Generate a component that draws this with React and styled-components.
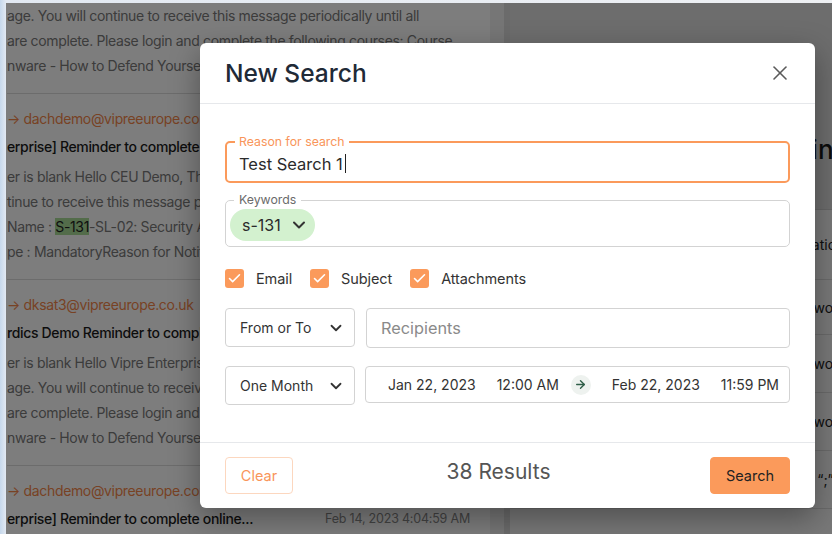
import React from "react";
import styled, { createGlobalStyle } from "styled-components";
import { X, ChevronDown, Check, ArrowRight } from "lucide-react";

const GlobalStyle = createGlobalStyle`
  html, body {
    margin: 0;
    padding: 0;
  }
  body {
    font-family: Inter, "Noto Sans", sans-serif;
    background: #e9eef4;
  }
  * {
    box-sizing: border-box;
  }
`;

const Screen = styled.div`
  position: relative;
  width: 832px;
  height: 534px;
  overflow: hidden;
  padding: 3px 0 0 6px;
  background: linear-gradient(90deg, #c6d8ec 0px, #e2e9f2 6px, #eef0f3 100%);
`;

const Window = styled.div`
  position: relative;
  display: flex;
  height: 100%;
  background: #fff;
  overflow: hidden;
`;

/* ---------- message list ---------- */

const ListPanel = styled.div`
  width: 484px;
  flex-shrink: 0;
  padding-left: 1px;
  overflow: hidden;
  font-size: 14px;
  letter-spacing: -0.35px;
`;

const Item = styled.div`
  padding: ${p => (p.$first ? "0" : "13px")} 0 15px;
  border-bottom: 1px solid #dcdcdc;
`;

const FromLine = styled.div`
  height: 24px;
  line-height: 24px;
  color: #f4874a;
  white-space: nowrap;
`;

const SubjectLine = styled.div`
  display: flex;
  align-items: center;
  justify-content: space-between;
  height: 30px;
  padding-right: 20px;
`;

const Subject = styled.span`
  font-weight: 500;
  color: #1c1c1c;
  white-space: nowrap;
`;

const Stamp = styled.span`
  font-size: 12.5px;
  letter-spacing: -0.2px;
  color: #8a8a8a;
  white-space: nowrap;
`;

const Body = styled.div`
  margin-top: ${p => (p.$first ? "0" : "3px")};
  color: #7a7a7a;
  line-height: 25px;
  white-space: nowrap;
`;

const Hit = styled.mark`
  background: #a9dc98;
  color: #1f1f1f;
`;

const Gutter = styled.div`
  width: 20px;
  flex-shrink: 0;
  background: #f1f1f1;
  border-right: 6px solid #dadada;
`;

/* ---------- detail panel ---------- */

const DetailPanel = styled.div`
  flex: 1;
  display: flex;
  flex-direction: column;
  background: #f4f4f4;
  overflow: hidden;
`;

const DetailHead = styled.div`
  height: 207px;
  display: flex;
  align-items: flex-end;
  padding: 0 0 44px 20px;
  background: #dedede;
  border-bottom: 1px solid #cfcfcf;
`;

const DetailTitle = styled.h2`
  margin: 0;
  font-size: 26px;
  font-weight: 500;
  color: #1a1a1a;
  white-space: nowrap;
`;

const DetailRow = styled.div`
  height: ${p => p.$h}px;
  display: grid;
  grid-template-columns: 260px auto;
  align-items: center;
  padding-left: 20px;
  border-bottom: 1px solid #d8d8d8;
  font-size: 14px;
  color: #222;
  white-space: nowrap;
`;

const DetailLabel = styled.span`
  color: #666;
`;

/* ---------- modal ---------- */

const Overlay = styled.div`
  position: absolute;
  inset: 0;
  background: rgba(0, 0, 0, 0.51);
  padding: 40px 0 0 194px;
`;

const Modal = styled.div`
  width: 615px;
  background: #fff;
  border-radius: 6px;
  box-shadow: 0 10px 30px rgba(0, 0, 0, 0.35);
  overflow: hidden;
`;

const Header = styled.div`
  height: 61px;
  display: flex;
  align-items: center;
  justify-content: space-between;
  padding: 0 25px;
  border-bottom: 1px solid #e6e8eb;
`;

const Title = styled.h1`
  margin: 0;
  font-size: 24.5px;
  font-weight: 500;
  color: #1f2a37;
`;

const CloseButton = styled.button`
  display: flex;
  padding: 0;
  margin-right: -2px;
  border: 0;
  background: none;
  color: #5a5a5a;
  cursor: pointer;
`;

const FormBody = styled.div`
  padding: 31px 25px 37px;
`;

const Field = styled.fieldset`
  margin: ${p => (p.$gap ? `${p.$gap}px` : "0")} 0 0;
  min-width: 0;
  border-radius: 5px;
  border: ${p => (p.$active ? "2px solid #fb9a5b" : "1px solid #d3d3d3")};
  padding: ${p => (p.$active ? "0 12px 3px" : "2px 4px 5px")};
`;

const Legend = styled.legend`
  padding: 0 ${p => (p.$active ? 4 : 5)}px;
  margin-left: ${p => (p.$active ? -4 : 4)}px;
  font-size: 12.3px;
  line-height: 14px;
  color: ${p => (p.$active ? "#f9955a" : "#6b6b6b")};
`;

const ValueLine = styled.div`
  height: 29px;
  display: flex;
  align-items: center;
  font-size: 16.5px;
  color: #2b2b2b;
`;

const Caret = styled.span`
  display: inline-block;
  width: 1px;
  height: 19px;
  margin-left: 2px;
  background: #222;
`;

const Chip = styled.span`
  display: inline-flex;
  align-items: center;
  gap: 8px;
  height: 32px;
  padding: 0 6px 0 12px;
  border-radius: 16px;
  background: #d3f1cf;
  font-size: 16px;
  color: #2b2b2b;
`;

const CheckRow = styled.div`
  display: flex;
  align-items: center;
  margin-top: 22px;
  height: 19px;
`;

const CheckItem = styled.label`
  display: flex;
  align-items: center;
  gap: 12px;
  margin-right: 18px;
  font-size: 14.5px;
  letter-spacing: -0.1px;
  color: #333;
`;

const Box = styled.span`
  width: 19px;
  height: 19px;
  border-radius: 3px;
  background: #fb9a5b;
  color: #fff;
  display: flex;
  align-items: center;
  justify-content: center;
`;

const Row = styled.div`
  display: flex;
  align-items: flex-start;
  gap: ${p => p.$space}px;
  margin-top: ${p => p.$gap}px;
`;

const Select = styled.div`
  width: 130px;
  height: 39px;
  flex-shrink: 0;
  display: flex;
  align-items: center;
  justify-content: space-between;
  padding: 0 9px 0 14px;
  border: 1px solid #d3d3d3;
  border-radius: 4px;
  font-size: 14px;
  color: #333;
`;

const TextInput = styled.div`
  flex: 1;
  height: 40px;
  display: flex;
  align-items: center;
  padding-left: 14px;
  border: 1px solid #d3d3d3;
  border-radius: 4px;
  font-size: 16.3px;
  color: #8a8a8a;
`;

const DateRange = styled.div`
  flex: 1;
  min-width: 0;
  height: 37px;
  display: flex;
  align-items: center;
  padding-left: 22px;
  border: 1px solid #d3d3d3;
  border-radius: 4px;
  font-size: 14px;
  color: #333;
`;

const Stamped = styled.span`
  margin-right: ${p => p.$gap}px;
  white-space: nowrap;
`;

const ArrowDot = styled.span`
  width: 20px;
  height: 20px;
  flex-shrink: 0;
  margin-right: 21px;
  border-radius: 50%;
  background: #eef2ef;
  color: #2f5e48;
  display: flex;
  align-items: center;
  justify-content: center;
`;

const Footer = styled.div`
  height: 66px;
  display: flex;
  align-items: center;
  justify-content: space-between;
  padding: 0 25px;
  border-top: 1px solid #e6e8eb;
`;

const Button = styled.button`
  width: ${p => (p.$primary ? 80 : 68)}px;
  height: 37px;
  padding: 0;
  border-radius: 4px;
  font-family: inherit;
  font-size: 14.5px;
  cursor: pointer;
  border: 1px solid ${p => (p.$primary ? "#fb9a5b" : "#fcd7bf")};
  background: ${p => (p.$primary ? "#fb9a5b" : "#fff")};
  color: ${p => (p.$primary ? "#222" : "#f9955a")};
`;

const Count = styled.span`
  font-size: 21px;
  color: #555;
  margin: 0 0 8px -6px;
`;

const messages = [
  {
    from: "→ dachdemo@vipreeurope.com",
    subject: "erprise] Reminder to complete online...",
    stamp: "Feb 14, 2023 4:04:59 AM",
    body: [
      "er is blank Hello CEU Demo, This is a reminder that you have",
      "tinue to receive this message periodically until all",
      <>
        Name : <Hit>S-131</Hit>-SL-02: Security Awareness
      </>,
      "pe : MandatoryReason for Notification"
    ]
  },
  {
    from: "→ dksat3@vipreeurope.co.uk",
    subject: "rdics Demo Reminder to complete online...",
    stamp: "Feb 14, 2023 4:04:59 AM",
    body: [
      "er is blank Hello Vipre Enterprise, This is a reminder",
      "age. You will continue to receive this message",
      "are complete. Please login and complete the following",
      "nware - How to Defend Yourself..."
    ]
  },
  {
    from: "→ dachdemo@vipreeurope.com",
    subject: "erprise] Reminder to complete online...",
    stamp: "Feb 14, 2023 4:04:59 AM",
    body: []
  }
];

const details = [
  { h: 70, label: "Reason", value: "Rotation policy" },
  { h: 55, label: "Course 1", value: "Network security basics" },
  { h: 58, label: "Course 2", value: "Network access control" },
  { h: 58, label: "Course 3", value: "Network hygiene" },
  { h: 58, label: "Separator", value: "List \u201c;\u201d" }
];

const App = () => {
  return (
    <>
      <GlobalStyle />
      <Screen>
        <Window>
          <ListPanel>
            <Item $first>
              <Body $first>
                <div>age. You will continue to receive this message periodically until all</div>
                <div>are complete. Please login and complete the following courses: Course</div>
                <div>nware - How to Defend Yourself...</div>
              </Body>
            </Item>
            {messages.map((m, i) => (
              <Item key={i}>
                <FromLine>{m.from}</FromLine>
                <SubjectLine>
                  <Subject>{m.subject}</Subject>
                  <Stamp>{m.stamp}</Stamp>
                </SubjectLine>
                {m.body.length > 0 && (
                  <Body>
                    {m.body.map((line, j) => (
                      <div key={j}>{line}</div>
                    ))}
                  </Body>
                )}
              </Item>
            ))}
          </ListPanel>
          <Gutter />
          <DetailPanel>
            <DetailHead>
              <DetailTitle>[Vipre Enterprise] Reminder to complete</DetailTitle>
            </DetailHead>
            {details.map(d => (
              <DetailRow key={d.label} $h={d.h}>
                <DetailLabel>{d.label}</DetailLabel>
                <span>{d.value}</span>
              </DetailRow>
            ))}
          </DetailPanel>

          <Overlay>
            <Modal>
              <Header>
                <Title>New Search</Title>
                <CloseButton aria-label="Close">
                  <X size={24} strokeWidth={1.6} />
                </CloseButton>
              </Header>

              <FormBody>
                <Field $active>
                  <Legend $active>Reason for search</Legend>
                  <ValueLine>
                    Test Search 1<Caret />
                  </ValueLine>
                </Field>

                <Field $gap={10}>
                  <Legend>Keywords</Legend>
                  <Chip>
                    s-131
                    <ChevronDown size={20} strokeWidth={2.4} color="#333" />
                  </Chip>
                </Field>

                <CheckRow>
                  <CheckItem>
                    <Box>
                      <Check size={15} strokeWidth={2.5} />
                    </Box>
                    Email
                  </CheckItem>
                  <CheckItem>
                    <Box>
                      <Check size={15} strokeWidth={2.5} />
                    </Box>
                    Subject
                  </CheckItem>
                  <CheckItem>
                    <Box>
                      <Check size={15} strokeWidth={2.5} />
                    </Box>
                    Attachments
                  </CheckItem>
                </CheckRow>

                <Row $gap={20} $space={11}>
                  <Select>
                    From or To
                    <ChevronDown size={18} strokeWidth={2.4} color="#333" />
                  </Select>
                  <TextInput>Recipients</TextInput>
                </Row>

                <Row $gap={18} $space={10}>
                  <Select>
                    One Month
                    <ChevronDown size={18} strokeWidth={2.4} color="#333" />
                  </Select>
                  <DateRange>
                    <Stamped $gap={21}>Jan 22, 2023</Stamped>
                    <Stamped $gap={12}>12:00 AM</Stamped>
                    <ArrowDot>
                      <ArrowRight size={13} strokeWidth={2.6} />
                    </ArrowDot>
                    <Stamped $gap={21}>Feb 22, 2023</Stamped>
                    <Stamped $gap={0}>11:59 PM</Stamped>
                  </DateRange>
                </Row>
              </FormBody>

              <Footer>
                <Button>Clear</Button>
                <Count>38 Results</Count>
                <Button $primary>Search</Button>
              </Footer>
            </Modal>
          </Overlay>
        </Window>
      </Screen>
    </>
  );
};

export default App;
